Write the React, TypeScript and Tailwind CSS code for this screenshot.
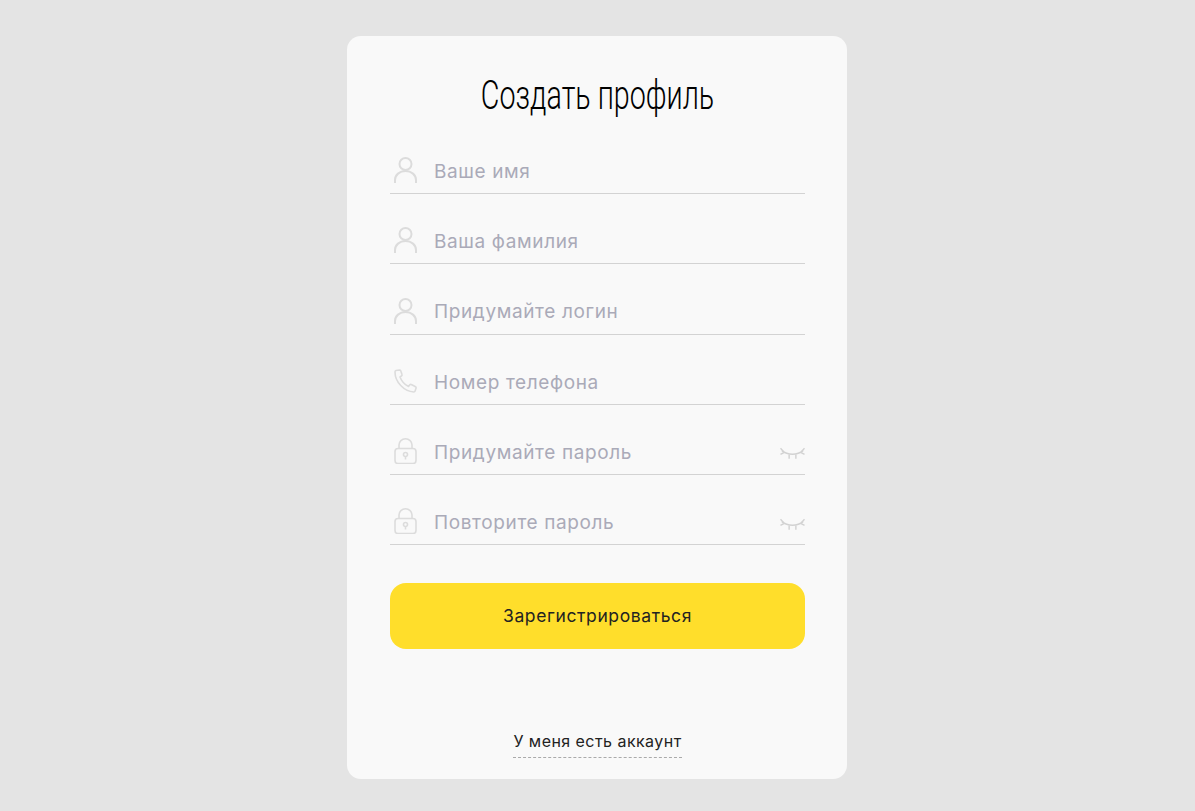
import type { ReactNode } from "react";

const UserIcon = () => (
  <svg width="24" height="26" viewBox="0 0 24 26" fill="none" stroke="#dcdcdc" strokeWidth="2">
    <circle cx="11.500" cy="7" r="6" />
    <path d="M1 26v-3c0-5 4.500-9 10.500-9s10.500 4 10.500 9v3" />
  </svg>
);

const PhoneIcon = () => (
  <svg width="24" height="24" viewBox="0 0 24 24" fill="none" stroke="#dcdcdc" strokeWidth="1.600" strokeLinejoin="round">
    <path d="M2 1.500 5.500 1c.6 0 1 .3 1.200.8l1.300 3.700c.2.5 0 1-.4 1.300L6 8c1.500 4 4.500 7.500 8.500 9.500l1.300-1.700c.4-.5 1-.6 1.500-.3l4.300 2.300c.5.300.6.800.5 1.300l-1 3c-.2.600-.7.900-1.300.9C10 22.500 1 13 1 3c0-.8.400-1.400 1-1.500Z" />
  </svg>
);

const LockIcon = () => (
  <svg width="24" height="26" viewBox="0 0 24 26" fill="none" stroke="#dcdcdc" strokeWidth="1.600">
    <rect x="1" y="10.500" width="21" height="15" rx="3" />
    <path d="M5 10.500V7a6.500 6.200 0 0 1 13 0v3.500" />
    <circle cx="11.500" cy="16.500" r="2" />
    <path d="M11.500 18.500v3" />
  </svg>
);

const EyeIcon = () => (
  <svg className="mt-[5px]" width="25" height="14" viewBox="0 0 26 14" fill="none" stroke="#d2d2d2" strokeWidth="1.500">
    <path d="M2 3.500c6 5 16 5 22 0" />
    <path d="M0.500 1 4 5M25.500 1 22 5M0.500 7.500 4 5.500M25.500 7.500 22 5.500M9.500 7.500v4.500M16.500 7.500v4.500" />
  </svg>
);

function Field({ icon, label, trailing }: { icon: ReactNode; label: string; trailing?: ReactNode }) {
  return (
    <div className="flex h-[70.2px] items-end border-b border-[#d3d3d3]">
      <div className="flex h-[44px] w-full items-center">
        <div className="mb-[2px] flex w-[44px] shrink-0 justify-start pl-[4px]">{icon}</div>
        <span className="mt-[2px] flex-1 text-[19px] tracking-[0.62px] text-[#aaaab8]">{label}</span>
        {trailing}
      </div>
    </div>
  );
}

export default function App() {
  return (
    <div className="flex min-h-[811px] justify-center bg-[#e4e4e4] pt-[36px] font-['Inter','Noto_Sans',sans-serif]">
      <div className="mr-[1px] flex h-[743px] w-[500px] flex-col rounded-[14px] bg-[#f9f9f9] pl-[43px] pr-[42px]">
        <h1 className="mt-[33px] mb-[1px] h-[54px] origin-center scale-x-[0.717] text-center font-['Roboto',sans-serif] text-[40px] leading-[54px] font-light text-black">
          Создать профиль
        </h1>
        <Field icon={<UserIcon />} label="Ваше имя" />
        <Field icon={<UserIcon />} label="Ваша фамилия" />
        <Field icon={<UserIcon />} label="Придумайте логин" />
        <Field icon={<PhoneIcon />} label="Номер телефона" />
        <Field icon={<LockIcon />} label="Придумайте пароль" trailing={<EyeIcon />} />
        <Field icon={<LockIcon />} label="Повторите пароль" trailing={<EyeIcon />} />
        <button className="mt-[38px] h-[66px] w-full rounded-[16px] bg-[#ffde2b] text-[17.5px] tracking-[0.6px] text-[#222]">
          Зарегистрироваться
        </button>
        <div className="mt-[80px] flex justify-center">
          <a className="border-b border-dashed border-[#aaa] pb-[4px] text-[16px] leading-[24px] tracking-[0.45px] text-[#222]">
            У меня есть аккаунт
          </a>
        </div>
      </div>
    </div>
  );
}
